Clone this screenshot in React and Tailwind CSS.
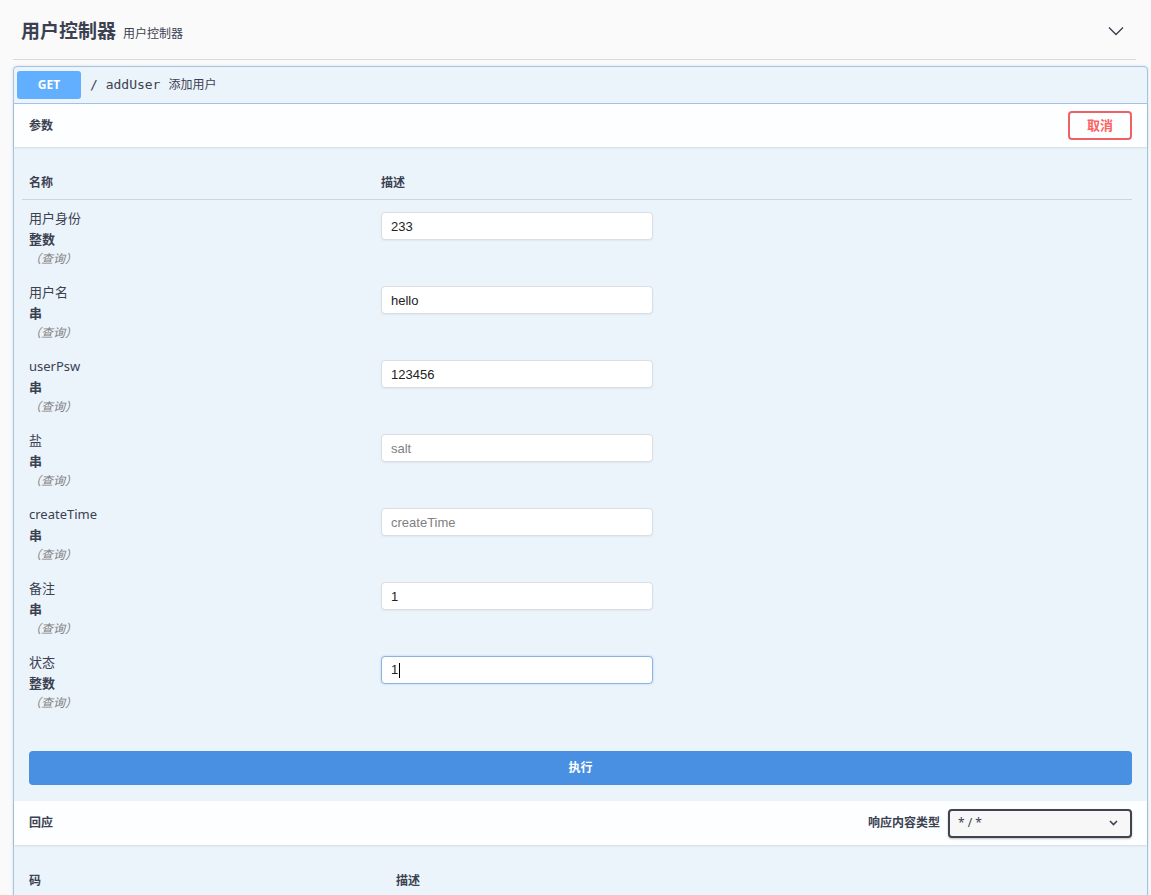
import React from "react";

const params = [
  { name: "用户身份", type: "整数", value: "233" },
  { name: "用户名", type: "串", value: "hello" },
  { name: "userPsw", type: "串", value: "123456" },
  { name: "盐", type: "串", placeholder: "salt" },
  { name: "createTime", type: "串", placeholder: "createTime" },
  { name: "备注", type: "串", value: "1" },
  { name: "状态", type: "整数", value: "1", focused: true }
];

function ParamRow({ p }) {
  return (
    <div className="flex h-[74px] items-start">
      <div className="w-[359px] pl-[7px] pt-[9px]">
        <div className="h-[19px] text-[13px] leading-[19px] text-[#3b4151]">
          {p.name}
        </div>
        <div className="h-[21px] pt-[2px] text-[13px] font-bold leading-[19px] text-[#3b4151]">
          {p.type}
        </div>
        <div className="h-[19px] text-[12px] italic leading-[19px] text-[#808080]">
          （查询）
        </div>
      </div>
      <div className="pt-[12px]">
        {p.focused ? (
          <div className="flex h-[28px] w-[272px] items-center rounded-[4px] border border-[#8cb3e0] bg-white pl-[9px] text-[13px] text-[#222] shadow-[0_0_2px_rgba(97,175,254,0.5)] [font-family:'Liberation_Sans',Arial,sans-serif]">
            1<span className="ml-[1px] inline-block h-[15px] w-px bg-black"></span>
          </div>
        ) : (
          <input
            readOnly
            defaultValue={p.value}
            placeholder={p.placeholder}
            className="h-[28px] w-[272px] rounded-[4px] border border-[#d9dee5] bg-white pl-[9px] text-[13px] text-[#222] placeholder-[#808080] shadow-[0_1px_2px_rgba(0,0,0,0.05)] outline-none [font-family:'Liberation_Sans',Arial,sans-serif]"
          />
        )}
      </div>
    </div>
  );
}

export default function App() {
  return (
    <div className="min-h-[895px] bg-[#fafafa] pr-[2px] [font-family:'Noto_Sans','Noto_Sans_CJK_SC',sans-serif] text-[#3b4151]">

      {/* Tag header */}
      <div className="mx-[13px] flex h-[60px] items-center justify-between border-b border-[#d6d9de] pl-[8px] pr-[12px]">
        <div className="flex items-baseline gap-[7px] pt-[4px]">
          <span className="text-[19px] font-bold text-[#3b4151]">用户控制器</span>
          <span className="text-[12px] text-[#3b4151]">用户控制器</span>
        </div>
        <svg width="16" height="10" viewBox="0 0 16 10" className="mt-[2px]">
          <path d="M1 1.5 L8 8.5 L15 1.5" fill="none" stroke="#3b4151" strokeWidth="1.4" />
        </svg>
      </div>

      {/* Operation block */}
      <div className="ml-[13px] mr-[1px] mt-[6px] rounded-[4px] border border-[#a3c4e6] bg-[#ebf3fb] shadow-[0_0_3px_rgba(0,0,0,0.12)]">

        {/* Summary */}
        <div className="flex h-[37px] items-center border-b border-[#a3c4e6] pl-[3px]">
          <div className="flex h-[28px] w-[64px] items-center justify-center rounded-[3px] bg-[#61affe] text-[12px] font-bold text-white">
            GET
          </div>
          <span className="ml-[9px] text-[13px] text-[#3b4151] [font-family:'DejaVu_Sans_Mono',monospace]">/ addUser</span>
          <span className="ml-[8px] text-[12px] text-[#3b4151]">添加用户</span>
        </div>

        {/* Parameters header */}
        <div className="flex h-[43px] items-center justify-between bg-white/90 pl-[15px] pr-[15px] shadow-[0_1px_2px_rgba(0,0,0,0.1)]">
          <span className="text-[12px] font-bold text-[#3b4151]">参数</span>
          <button className="flex h-[29px] w-[64px] items-center justify-center rounded-[4px] border-2 border-[#f06163] bg-transparent text-[13px] font-bold text-[#ff6060]">
            取消
          </button>
        </div>

        {/* Parameters table */}
        <div className="ml-[8px] mr-[15px] pt-[28px]">
          <div className="flex h-[25px] items-start border-b border-[#cfd5dd] text-[12px] font-bold leading-[16px] text-[#3b4151]">
            <div className="w-[359px] pl-[7px]">名称</div>
            <div>描述</div>
          </div>
          {params.map((p) => (
            <ParamRow key={p.name} p={p} />
          ))}
        </div>

        {/* Execute */}
        <div className="mx-[15px] pb-[16px] pt-[33px]">
          <button className="flex h-[34px] w-full items-center justify-center rounded-[4px] bg-[#4990e2] text-[12px] font-bold text-white">
            执行
          </button>
        </div>

        {/* Responses header */}
        <div className="flex h-[44px] items-center justify-between bg-white/90 pl-[15px] pr-[15px] shadow-[0_1px_2px_rgba(0,0,0,0.1)]">
          <span className="text-[12px] font-bold text-[#3b4151]">回应</span>
          <div className="flex items-center gap-[8px]">
            <span className="text-[12px] font-bold text-[#3b4151]">响应内容类型</span>
            <div className="flex h-[29px] w-[184px] items-center justify-between rounded-[4px] border-2 border-[#41444e] bg-[#f7f7f7] pl-[8px] pr-[12px] shadow-[0_1px_2px_rgba(0,0,0,0.25)]">
              <span className="text-[12px] text-[#3b4151]">* / *</span>
              <svg width="9" height="6" viewBox="0 0 9 6">
                <path d="M1 1 L4.5 4.5 L8 1" fill="none" stroke="#3b4151" strokeWidth="1.6" />
              </svg>
            </div>
          </div>
        </div>

        {/* Responses table */}
        <div className="ml-[8px] mr-[15px] pb-[40px] pt-[24px]">
          <div className="flex h-[24px] items-center text-[12px] font-bold text-[#3b4151]">
            <div className="w-[374px] pl-[7px]">码</div>
            <div>描述</div>
          </div>
        </div>
      </div>
    </div>
  );
}
